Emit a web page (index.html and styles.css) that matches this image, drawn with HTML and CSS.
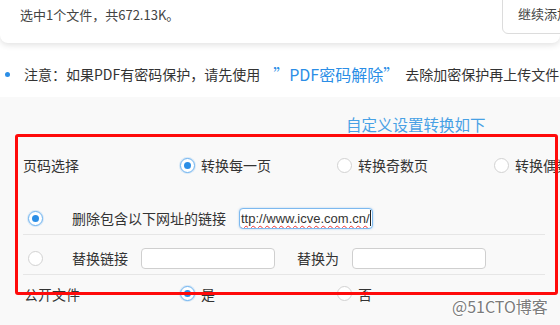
FILE: index.html
```html
<!DOCTYPE html>
<html lang="zh">
<head>
<meta charset="utf-8">
<link rel="stylesheet" href="styles.css">
</head>
<body>
<div class="page">
  <div class="file-card">
    <span class="file-info">选中1个文件，共672.13K。</span>
    <span class="add-btn">继续添加文件</span>
  </div>
  <div class="notice">
    <span class="dot"></span>
    <span class="notice-text">注意：如果PDF有密码保护，请先使用</span>
    <span class="notice-link">”PDF密码解除”</span>
    <span class="notice-text">去除加密保护再上传文件</span>
  </div>
  <div class="settings">
    <div class="settings-title">自定义设置转换如下</div>
    <div class="opt-row page-row">
      <span class="row-label">页码选择</span>
      <span class="opt"><span class="radio on"></span>转换每一页</span>
      <span class="opt"><span class="radio"></span>转换奇数页</span>
      <span class="opt"><span class="radio"></span>转换偶数页</span>
    </div>
    <div class="link-rows">
      <div class="link-row">
        <span class="radio on"></span>
        <span class="link-label">删除包含以下网址的链接</span>
        <span class="field focus"><span class="spell">ttp://www.icve.com.cn/</span><span class="caret"></span></span>
      </div>
      <div class="link-row">
        <span class="radio"></span>
        <span class="link-label">替换链接</span>
        <span class="field"></span>
        <span class="link-label mid">替换为</span>
        <span class="field"></span>
      </div>
    </div>
    <div class="opt-row public-row">
      <span class="row-label">公开文件</span>
      <span class="opt"><span class="radio on"></span>是</span>
      <span class="opt"><span class="radio"></span>否</span>
    </div>
    <div class="annot"></div>
    <div class="watermark">@51CTO博客</div>
  </div>
</div>
</body>
</html>
```

FILE: styles.css
```css
* { box-sizing: border-box; }
html, body {
  margin: 0;
  padding: 0;
  background: #fff;
  overflow: hidden;
}
body {
  width: 560px;
  height: 325px;
  font-family: "Noto Sans CJK SC", "Noto Sans", sans-serif;
  color: #333;
  font-size: 14px;
}
.page {
  width: 560px;
  height: 325px;
  overflow: hidden;
  position: relative;
}
.file-card {
  height: 43px;
  background: #fff;
  border-radius: 0 0 8px 8px;
  box-shadow: 0 2px 6px rgba(0, 0, 0, 0.12);
  display: flex;
  align-items: flex-start;
  white-space: nowrap;
  position: relative;
  z-index: 1;
}
.file-info {
  font-size: 13px;
  line-height: 18px;
  margin: 6px 0 0 20px;
  color: #444;
}
.add-btn {
  margin-left: auto;
  margin-top: -8px;
  margin-right: -40px;
  height: 42px;
  padding: 12px 0 0 15px;
  width: 98px;
  border: 1px solid #dcdcdc;
  border-radius: 6px;
  font-size: 13px;
  line-height: 18px;
  color: #444;
  background: #fff;
}
.notice {
  height: 54px;
  display: flex;
  align-items: center;
  white-space: nowrap;
  padding: 8px 0 0 5px;
}
.dot {
  width: 5px;
  height: 5px;
  border-radius: 50%;
  background: #2b8ee6;
  margin-right: 14px;
  flex: none;
}
.notice-text {
  font-size: 14px;
  line-height: 20px;
  color: #333;
  flex: none;
}
.notice-link {
  font-size: 16px;
  line-height: 20px;
  color: #2b8ee6;
  margin: 0 6px 0 13px;
  flex: none;
}
.settings {
  background: #f9f9f9;
  height: 228px;
  padding-top: 14px;
  position: relative;
}
.settings-title {
  margin-left: 346px;
  font-size: 15.5px;
  line-height: 26px;
  color: #48a1e5;
  white-space: nowrap;
}
.opt-row {
  display: flex;
  align-items: center;
  padding-left: 23px;
  white-space: nowrap;
}
.page-row {
  margin-top: 8px;
  height: 40px;
}
.row-label {
  width: 157px;
  flex: none;
  line-height: 20px;
}
.opt {
  width: 157px;
  flex: none;
  display: flex;
  align-items: center;
  line-height: 20px;
}
.radio {
  width: 15px;
  height: 15px;
  border-radius: 50%;
  border: 1px solid #d2d2d2;
  background: #fff;
  margin-right: 6px;
  flex: none;
  position: relative;
}
.radio.on {
  border-color: #6eb3f0;
  box-shadow: 0 0 0 1px rgba(110, 179, 240, 0.25);
}
.radio.on::after {
  content: "";
  position: absolute;
  left: 3px;
  top: 3px;
  width: 7px;
  height: 7px;
  border-radius: 50%;
  background: #2b8ee6;
}
.link-rows {
  margin: 10px 15px 0 23px;
}
.link-row {
  height: 40px;
  border-bottom: 1px solid #e6e6e6;
  display: flex;
  align-items: center;
  padding: 7px 0 0 5px;
  white-space: nowrap;
}
.link-row .radio { margin-right: 29px; }
.link-label {
  line-height: 20px;
  margin-right: 13px;
  flex: none;
}
.link-label.mid { margin-left: 22px; }
.field {
  width: 134px;
  height: 21px;
  border: 1px solid #cfcfcf;
  border-radius: 4px;
  background: #fff;
  flex: none;
  display: flex;
  align-items: center;
  overflow: hidden;
  padding-left: 1px;
}
.field.focus {
  border-color: #7db9ef;
  box-shadow: 0 0 2px rgba(80, 160, 235, 0.5);
}
.spell {
  font-family: "Liberation Sans", Arial, sans-serif;
  font-size: 13px;
  line-height: 17px;
  color: #333;
  text-decoration: underline wavy #e33;
  text-decoration-thickness: 1px;
  text-underline-offset: 2px;
  white-space: nowrap;
  flex: none;
}
.caret {
  width: 1px;
  height: 16px;
  background: #222;
  flex: none;
}
.public-row {
  height: 40px;
  align-items: flex-start;
  padding-top: 9px;
  padding-left: 24px;
}
.public-row .row-label { width: 156px; }
.public-row .radio { margin-top: 2px; }
.public-row .opt { align-items: flex-start; }
.annot {
  position: absolute;
  left: 15px;
  top: 37px;
  width: 543px;
  height: 161px;
  border: 3px solid #ff0b0b;
  border-radius: 3px;
  pointer-events: none;
}
.watermark {
  position: absolute;
  left: 452px;
  top: 198px;
  font-size: 16px;
  line-height: 22px;
  color: #7b7b7b;
  white-space: nowrap;
  text-shadow: 1px 0 0 #fff, -1px 0 0 #fff, 0 1px 0 #fff, 0 -1px 0 #fff;
}
```
